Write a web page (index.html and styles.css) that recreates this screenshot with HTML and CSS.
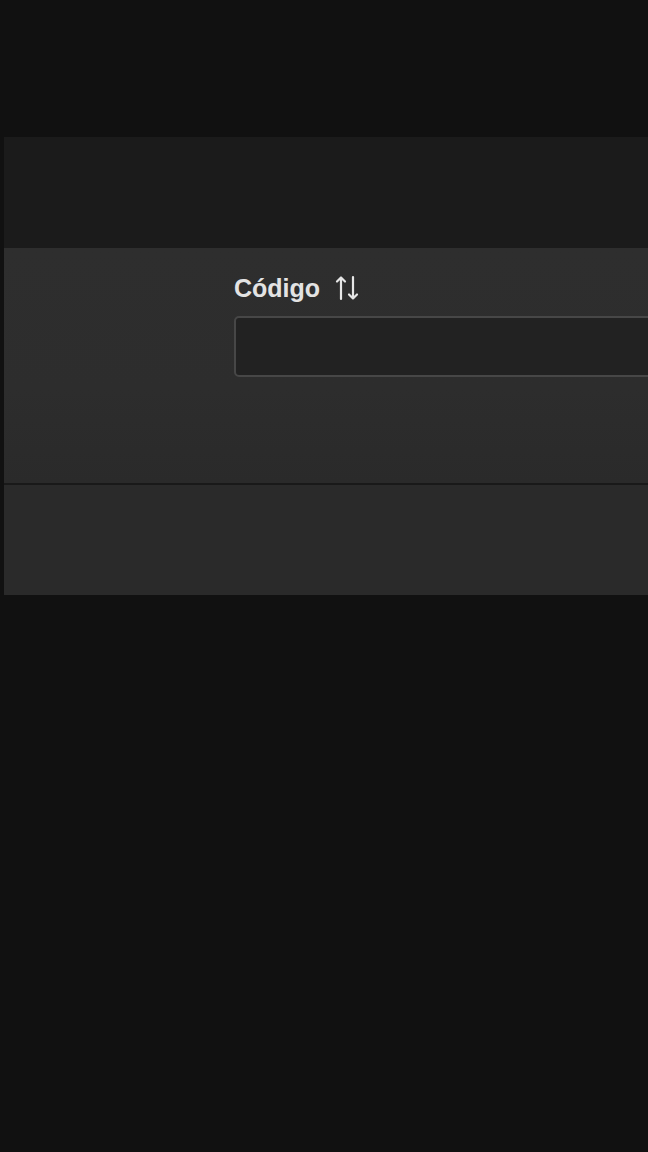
FILE: index.html
```html
<!DOCTYPE html>
<html lang="es">
<head>
<meta charset="utf-8">
<link rel="stylesheet" href="styles.css">
</head>
<body>
<div class="page">
  <div class="panel">
    <div class="panel-header"></div>
    <div class="filter-row">
      <div class="filter-col">
        <div class="col-label">
          <span>Código</span>
          <svg class="sort-icon" width="26" height="26" viewBox="0 0 26 26" fill="none" stroke="#e6e6e6" stroke-width="2.2" stroke-linecap="round" stroke-linejoin="round">
            <path d="M7 24V2.5M3 6.5L7 2.5l4 4"/>
            <path d="M19 2v21.5M15 19.5l4 4 4-4"/>
          </svg>
        </div>
        <div class="filter-input"></div>
      </div>
    </div>
    <div class="data-row"></div>
  </div>
</div>
</body>
</html>
```
FILE: styles.css
```css
html, body {
  margin: 0;
  padding: 0;
  background: #111111;
  overflow: hidden;
}
.page {
  width: 648px;
  height: 1152px;
  padding-top: 137px;
  box-sizing: border-box;
  overflow: hidden;
}
.panel {
  margin-left: 4px;
  width: 700px;
  display: flex;
  flex-direction: column;
}
.panel-header {
  height: 111px;
  background: #1b1b1b;
}
.filter-row {
  background: linear-gradient(#2e2e2e 0%, #2d2d2d 60%, #2a2a2a 100%);
  border-bottom: 2px solid #191919;
  padding-left: 230px;
  padding-top: 24px;
  height: 211px;
}
.filter-col {
  display: flex;
  flex-direction: column;
  gap: 12px;
}
.col-label {
  display: flex;
  align-items: center;
  gap: 14px;
  font-family: "Liberation Sans", Arial, sans-serif;
  font-weight: bold;
  font-size: 25px;
  color: #e3e3e3;
  height: 32px;
}
.sort-icon {
  display: block;
}
.filter-input {
  height: 57px;
  border: 2px solid #474747;
  border-radius: 5px;
  background: #222222;
}
.data-row {
  height: 110px;
  background: #2a2a2a;
}
```
